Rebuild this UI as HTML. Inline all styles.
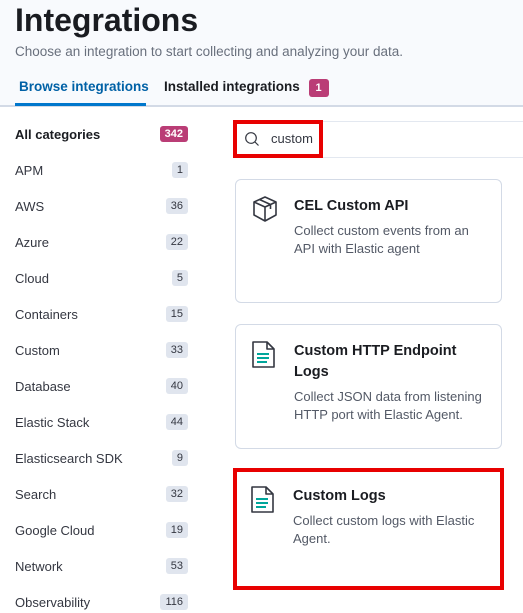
<!DOCTYPE html><html><head><style>
body{margin:0;width:523px;height:613px;overflow:hidden;background:#fff;font-family:"Liberation Sans",sans-serif;color:#343741;position:relative}
.hdr{position:absolute;left:0;top:0;width:523px;height:105px;background:#f8fafd;border-bottom:2px solid #d3dae6}
h1{position:absolute;left:15px;top:2px;margin:0;font-size:32px;font-weight:bold;color:#1a1c21}
.sub{position:absolute;left:15px;top:44px;font-size:13.5px;color:#69707d}
.tab{position:absolute;top:79px;font-size:13.5px;font-weight:bold}
.ul{position:absolute;left:15px;top:103px;width:131px;height:3px;background:#0077cc}
.nb{display:inline-block;background:#ba3d76;color:#fff;border-radius:3px;font-size:11px;font-weight:bold;padding:2px 7px;line-height:14px}
.cat{position:absolute;left:15px;width:173px;font-size:13px;color:#343741}
.cat span{position:absolute;right:0;top:-1px;background:#e0e5ee;border-radius:3px;font-size:11px;padding:1px 5px;line-height:14px}
.search{position:absolute;left:234px;top:121px;width:289px;height:35px;border-top:1px solid #e3e8f0;border-bottom:1px solid #e3e8f0}
.red{position:absolute;border:4px solid #e80000;box-sizing:border-box}
.card{position:absolute;left:235px;width:267px;border:1px solid #d3dae6;border-radius:6px;box-sizing:border-box;background:#fff}
.ct{position:absolute;left:58px;top:16px;font-size:14.5px;font-weight:bold;color:#1a1c21;line-height:21px;width:200px}
.cd{position:absolute;left:58px;font-size:13px;color:#535966;line-height:18px;width:188px}
.ic{position:absolute;left:14px;top:14px}
</style></head><body>
<div class="hdr"></div>
<h1>Integrations</h1>
<div class="sub">Choose an integration to start collecting and analyzing your data.</div>
<div class="tab" style="left:19px;color:#0061a6">Browse integrations</div>
<div class="tab" style="left:164px;color:#1a1c21">Installed integrations <span class="nb" style="margin-left:5px">1</span></div>
<div class="ul"></div>
<div class="cat" style="top:127px;font-weight:bold;color:#1a1c21">All categories<span style="background:#ba3d76;color:#fff;font-weight:bold">342</span></div>
<div class="cat" style="top:163px">APM<span>1</span></div>
<div class="cat" style="top:199px">AWS<span>36</span></div>
<div class="cat" style="top:235px">Azure<span>22</span></div>
<div class="cat" style="top:271px">Cloud<span>5</span></div>
<div class="cat" style="top:307px">Containers<span>15</span></div>
<div class="cat" style="top:343px">Custom<span>33</span></div>
<div class="cat" style="top:379px">Database<span>40</span></div>
<div class="cat" style="top:415px">Elastic Stack<span>44</span></div>
<div class="cat" style="top:451px">Elasticsearch SDK<span>9</span></div>
<div class="cat" style="top:487px">Search<span>32</span></div>
<div class="cat" style="top:523px">Google Cloud<span>19</span></div>
<div class="cat" style="top:559px">Network<span>53</span></div>
<div class="cat" style="top:595px">Observability<span>116</span></div>
<div class="search"></div>
<svg style="position:absolute;left:244px;top:131px" width="16" height="16" viewBox="0 0 16 16"><circle cx="7" cy="7" r="5.3" fill="none" stroke="#343741" stroke-width="1.2"/><path d="M11 11l3.5 3.5" stroke="#343741" stroke-width="1.2"/></svg>
<div style="position:absolute;left:271px;top:131px;font-size:13px;color:#343741">custom</div>
<div class="red" style="left:233px;top:120px;width:90px;height:38px"></div>
<div class="card" style="top:179px;height:124px">
<svg class="ic" width="30" height="30" viewBox="0 0 30 30"><path d="M15 3L26 8V21L15 27L4 21V8Z M4 8L15 13L26 8 M15 13V27 M9.5 5.5L20.5 10.5V15" fill="none" stroke="#343741" stroke-width="1.6" stroke-linejoin="round"/></svg>
<div class="ct">CEL Custom API</div>
<div class="cd" style="top:42px">Collect custom events from an API with Elastic agent</div></div>
<div class="card" style="top:324px;height:125px">
<svg class="ic" width="30" height="32" viewBox="0 0 30 32"><path d="M3 3H17L24 10V28H3Z M17 3V10H24" fill="none" stroke="#343741" stroke-width="1.6" stroke-linejoin="round"/><path d="M7 15H19M7 19H19M7 23H17" stroke="#00a69b" stroke-width="2"/></svg>
<div class="ct">Custom HTTP Endpoint Logs</div>
<div class="cd" style="top:63px">Collect JSON data from listening HTTP port with Elastic Agent.</div></div>
<div class="card" style="top:470px;height:118px;border:none">
<svg class="ic" width="30" height="32" viewBox="0 0 30 32"><path d="M3 3H17L24 10V28H3Z M17 3V10H24" fill="none" stroke="#343741" stroke-width="1.6" stroke-linejoin="round"/><path d="M7 15H19M7 19H19M7 23H17" stroke="#00a69b" stroke-width="2"/></svg>
<div class="ct">Custom Logs</div>
<div class="cd" style="top:42px">Collect custom logs with Elastic Agent.</div></div>
<div class="red" style="left:233px;top:468px;width:271px;height:122px"></div>
</body></html>
